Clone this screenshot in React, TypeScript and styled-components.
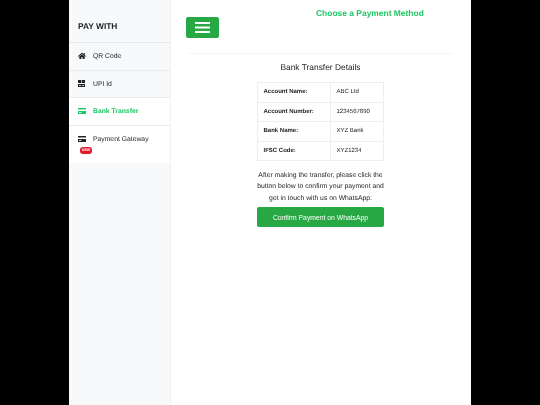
import React from "react";
import styled, { createGlobalStyle } from "styled-components";
import { FaHome } from "react-icons/fa";

const GlobalStyle = createGlobalStyle`
  html, body {
    margin: 0;
    height: 100%;
    background-color: #000;
    font-family: "Liberation Sans", Arial, sans-serif;
    text-rendering: geometricPrecision;
  }
`;

// styles
const Page = styled.div`
  display: flex;
  width: 402px;
  height: 405px;
  margin: 0 auto;
  color: #212529;
  background-color: #fff;
  overflow: hidden;
  filter: blur(0.25px);
`;

const Sidebar = styled.aside`
  width: 102px;
  flex-shrink: 0;
  box-sizing: border-box;
  background-color: #f8f9fa;
  border-right: 1px solid #f0f1f3;
`;

const SidebarTitle = styled.div`
  height: 43px;
  padding: 21px 0 0 9px;
  box-sizing: border-box;
  font-size: 8.4px;
  line-height: 10px;
  font-weight: 700;
  border-bottom: 1px solid #e6e8ea;
`;

const MenuItem = styled.div<{ $active?: boolean; $white?: boolean; $tall?: boolean }>`
  display: flex;
  align-items: flex-start;
  height: ${(props) => (props.$tall ? "37px" : "27.5px")};
  padding: 9px 0 0 9px;
  box-sizing: border-box;
  font-size: 6.8px;
  line-height: 9px;
  font-weight: ${(props) => (props.$active ? 700 : 400)};
  color: ${(props) => (props.$active ? "#1fc765" : "inherit")};
  background-color: ${(props) => (props.$white ? "#fff" : "transparent")};
  border-bottom: ${(props) => (props.$tall ? "none" : "1px solid #e9ebed")};
`;

const IconSlot = styled.span`
  display: flex;
  align-items: center;
  width: 15px;
  height: 8px;
  flex-shrink: 0;
  font-size: 8px;
  color: #212529;
`;

const GatewayLabel = styled.div`
  display: flex;
  flex-direction: column;
  align-items: flex-start;
`;

const NewBadge = styled.span`
  margin: 3px 0 0 -13px;
  width: 12px;
  height: 7px;
  line-height: 7px;
  border-radius: 3px;
  text-align: center;
  font-size: 3.6px;
  font-weight: 700;
  color: #fff;
  background-color: #e3192c;
`;

const Main = styled.main`
  flex: 1;
  padding-left: 15px;
`;

const Header = styled.header`
  display: flex;
  height: 53px;
`;

const MenuButton = styled.button`
  display: flex;
  align-items: center;
  justify-content: center;
  width: 33px;
  height: 21px;
  margin-top: 17px;
  padding: 0;
  border: none;
  border-radius: 2px;
  background-color: #28a745;
`;

const PageTitle = styled.h1`
  margin: 8px 0 0 97px;
  font-size: 8.45px;
  line-height: 11px;
  font-weight: 700;
  color: #1fc765;
`;

const Rule = styled.hr`
  width: 265px;
  margin: 0 0 0 2px;
  border: none;
  border-top: 1px solid #f3f4f5;
`;

const Details = styled.section`
  display: flex;
  flex-direction: column;
  align-items: center;
  width: 269px;
`;

const DetailsTitle = styled.h2`
  margin: 7px 0 0;
  font-size: 8.4px;
  line-height: 12px;
  font-weight: 400;
`;

const Table = styled.table`
  width: 127px;
  margin-top: 9px;
  border-collapse: collapse;
  font-size: 6px;
`;

const Cell = styled.td`
  height: 19.5px;
  padding: 0 0 0 5.5px;
  box-sizing: border-box;
  border: 1px solid #eceef0;
`;

const LabelCell = styled(Cell)`
  width: 73px;
  font-weight: 700;
`;

const Note = styled.p`
  width: 135px;
  margin: 8.5px 0 0;
  font-size: 6.8px;
  line-height: 11.5px;
  text-align: center;
`;

const ConfirmButton = styled.button`
  width: 127px;
  height: 20px;
  margin-top: 3px;
  padding: 0;
  border: none;
  border-radius: 2px;
  font-family: inherit;
  font-size: 6.8px;
  color: #fff;
  background-color: #28a745;
`;

// data
const rows = [
  ["Account Name:", "ABC Ltd"],
  ["Account Number:", "1234567890"],
  ["Bank Name:", "XYZ Bank"],
  ["IFSC Code:", "XYZ1234"],
];

// icons
const BarsIcon: React.FC = () => (
  <svg width="15" height="11" viewBox="0 0 15 11" fill="#fff">
    <path d="M0 0h15v2H0zM0 4.5h15v2H0zM0 9h15v2H0z" />
  </svg>
);

const QrIcon: React.FC = () => (
  <svg width="7" height="7" viewBox="0 0 7 7" fill="#212529">
    <path d="M0 0h3v3H0zM3.6 0H7v3H3.6zM0 3.9h7V7H0z" />
    <path d="M1 5h2v.8H1zM4 5h2v.8H4z" fill="#fff" />
  </svg>
);

const CardIcon: React.FC<{ color: string }> = ({ color }) => (
  <svg width="8" height="6" viewBox="0 0 8 6" fill={color}>
    <path d="M0 0h8v1.6H0zM0 3h8v3H0z" />
    <path d="M1 4.2h2.4v.8H1z" fill="#fff" />
  </svg>
);

// component
const App: React.FC = () => {
  return (
    <Page>
      <GlobalStyle />
      <Sidebar>
        <SidebarTitle>PAY WITH</SidebarTitle>
        <MenuItem>
          <IconSlot>
            <FaHome />
          </IconSlot>
          QR Code
        </MenuItem>
        <MenuItem>
          <IconSlot>
            <QrIcon />
          </IconSlot>
          UPI Id
        </MenuItem>
        <MenuItem $active $white>
          <IconSlot>
            <CardIcon color="#1fc765" />
          </IconSlot>
          Bank Transfer
        </MenuItem>
        <MenuItem $white $tall>
          <IconSlot>
            <CardIcon color="#212529" />
          </IconSlot>
          <GatewayLabel>
            Payment Gateway
            <NewBadge>NEW</NewBadge>
          </GatewayLabel>
        </MenuItem>
      </Sidebar>
      <Main>
        <Header>
          <MenuButton aria-label="Menu">
            <BarsIcon />
          </MenuButton>
          <PageTitle>Choose a Payment Method</PageTitle>
        </Header>
        <Rule />
        <Details>
          <DetailsTitle>Bank Transfer Details</DetailsTitle>
          <Table>
            <tbody>
              {rows.map(([label, value]) => (
                <tr key={label}>
                  <LabelCell>{label}</LabelCell>
                  <Cell>{value}</Cell>
                </tr>
              ))}
            </tbody>
          </Table>
          <Note>
            After making the transfer, please click the button below to confirm your payment and
            get in touch with us on WhatsApp:
          </Note>
          <ConfirmButton>Confirm Payment on WhatsApp</ConfirmButton>
        </Details>
      </Main>
    </Page>
  );
};

export default App;
